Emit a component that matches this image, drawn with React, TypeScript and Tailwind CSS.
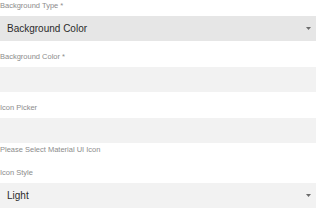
export default function App() {
  return (
    <div className="w-[320px] bg-white font-['Liberation_Sans',Arial,sans-serif]">
      <Field label="Background Type *">
        <SelectBox value="Background Color" dark />
      </Field>
      <Field label="Background Color *">
        <div className="h-[25px] w-[316px] bg-[#f2f2f2]" />
      </Field>
      <Field label="Icon Picker" helper="Please Select Material UI Icon">
        <div className="h-[25px] w-[316px] bg-[#f2f2f2]" />
      </Field>
      <Field label="Icon Style">
        <SelectBox value="Light" />
      </Field>
    </div>
  );
}

function Field({
  label,
  helper,
  children,
}: {
  label: string;
  helper?: string;
  children: React.ReactNode;
}) {
  return (
    <div className="mb-[10px]">
      <div className="mb-[3px] h-[13px] text-[7.5px] leading-[12px] text-[#8c8c8c]">{label}</div>
      {children}
      {helper && (
        <div className="mt-[1px] h-[13px] text-[7.5px] leading-[12px] text-[#8c8c8c]">{helper}</div>
      )}
    </div>
  );
}

function SelectBox({ value, dark }: { value: string; dark?: boolean }) {
  return (
    <div
      className={`flex h-[25px] w-[316px] items-center justify-between pl-[7px] pr-[5px] text-[10px] text-[#2b2b2b] ${
        dark ? "bg-[#e6e6e6]" : "bg-[#f2f2f2]"
      }`}
    >
      <span>{value}</span>
      <svg width="5" height="3" viewBox="0 0 5 3" aria-hidden>
        <path d="M0 0h5L2.5 3z" fill="#6b6b6b" />
      </svg>
    </div>
  );
}
